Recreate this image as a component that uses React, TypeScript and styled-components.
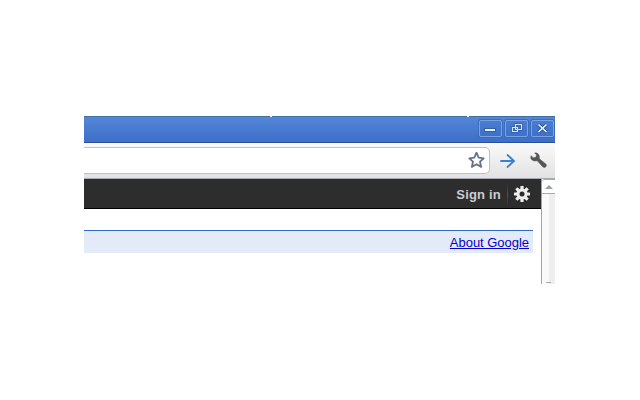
import React from 'react';
import styled, { createGlobalStyle } from 'styled-components';

const GlobalStyle = createGlobalStyle`
  * { box-sizing: border-box; }
  body { margin: 0; background: #fff; font-family: "Liberation Sans", Arial, sans-serif; }
  svg { display: block; }
`;
const Page = styled.main`
  width: 640px;
  height: 400px;
  padding: 116px 85px 116px 84px;
  overflow: hidden;
`;
const BrowserWindow = styled.div`
  width: 471px;
  height: 168px;
  overflow: hidden;
`;
const TitleBar = styled.header`
  position: relative;
  height: 27px;
  display: flex;
  justify-content: flex-end;
  gap: 3px;
  padding: 3px 1px 0 0;
  border-top: 1px solid #416f9f;
  border-bottom: 1px solid #294f9d;
  background: linear-gradient(#5386d8, #4274cc 75%, #3f6fc8);
`;
const TabGap = styled.span<{ $left: number }>`
  position: absolute;
  top: -1px;
  left: ${({ $left }) => $left}px;
  width: 2px;
  height: 1px;
  background: #f5f8f5;
`;
const WindowButton = styled.button`
  width: 23px;
  height: 17px;
  padding: 0;
  border: 1px solid #7ba2e0;
  border-radius: 2px;
  background: linear-gradient(#4a7cd0, #3e70c7);
  box-shadow: 0 0 0 1px #3b6cbc;
`;
const Toolbar = styled.div`
  height: 36px;
  display: flex;
  padding-top: 4px;
  border-bottom: 1px solid #a3acb5;
  background: linear-gradient(#fafafa, #e2e2e3);
`;
const AddressBar = styled.div`
  width: 406px;
  height: 27px;
  display: flex;
  justify-content: flex-end;
  padding: 3px 3px 0 0;
  border: solid #c0c0c2;
  border-width: 1px 1px 1px 0;
  border-radius: 0 5px 5px 0;
  background: #fff;
`;
const ToolIcon = styled.div<{ $gap: number }>`
  margin: 5px 0 0 ${({ $gap }) => $gap}px;
`;
const Viewport = styled.div`
  display: flex;
  height: 105px;
`;
const Content = styled.section`
  width: 457px;
`;
const AccountBar = styled.nav`
  height: 30px;
  display: flex;
  justify-content: flex-end;
  padding-right: 10px;
  border-bottom: 1px solid #000;
  background: #2d2d2d;
`;
const SignIn = styled.span`
  margin-right: 6px;
  color: #ccc;
  font-size: 13px;
  font-weight: bold;
  line-height: 31px;
  letter-spacing: 0.2px;
`;
const Divider = styled.span`
  width: 1px;
  height: 23px;
  margin: 4px 5px 0 0;
  background: linear-gradient(#303030, #505050, #303030);
`;
const Settings = styled.span`
  padding-top: 6px;
`;
const LinkStrip = styled.div`
  width: 449px;
  height: 23px;
  margin-top: 21px;
  padding-right: 4px;
  border-top: 1px solid #3369c8;
  background: #e3ebf8;
  font-size: 13px;
  line-height: 24px;
  letter-spacing: -0.03px;
  text-align: right;
`;
const AboutLink = styled.a`
  color: #0800cc;
`;
const Scrollbar = styled.aside`
  width: 14px;
  height: 105px;
  display: flex;
  flex-direction: column;
  border-left: 1px solid #a3a3a3;
  background: linear-gradient(90deg, #fafafa 0 7px, #eeeeee 7px);
`;
const ScrollUp = styled.div`
  height: 15px;
  padding: 5px 0 0 3px;
  border-top: 1px solid #aaa;
  border-bottom: 1px solid #aaa;
  border-radius: 3px 0 0 0;
  background: #fff;
`;
const ScrollEnd = styled.div`
  width: 5px;
  height: 1px;
  margin: auto 0 1px 4px;
  background: #a6a6a6;
`;
const starPath = 'M8.5 1.7 10.7 6.7l5 .6-3.7 3.4 1.2 5.2-4.7-2.7-4.7 2.7 1.2-5.2L1.3 7.3l5-.6Z';

export default function App() {
  return (
    <>
      <GlobalStyle />
      <Page>
        <BrowserWindow>
          <TitleBar>
            <TabGap $left={186} /><TabGap $left={383} />
            <WindowButton aria-label="Minimize">
              <svg width="21" height="15"><path d="M4 7h12v4H4z" fill="#315fae" /><path d="M5 8h10v2H5z" fill="#e9f1fb" /></svg>
            </WindowButton>
            <WindowButton aria-label="Restore">
              <svg width="21" height="15" fill="none">
                <path d="M9.5 3.5h6v5h-6zM6.5 6.5h5v4h-5z" stroke="#315ca9" strokeWidth="2.4" />
                <path d="M9.5 3.5h6v5h-6zM6.5 6.5h5v4h-5z" stroke="#dce8fa" strokeWidth="1.1" />
              </svg>
            </WindowButton>
            <WindowButton aria-label="Close">
              <svg width="21" height="15" fill="none"><path d="m6.5 3.5 8 7.5m0-7.5-8 7.5" stroke="#244f9d" strokeWidth="3.2" /><path d="m6.5 3.5 8 7.5m0-7.5-8 7.5" stroke="#f1f6fc" strokeWidth="1.7" /></svg>
            </WindowButton>
          </TitleBar>
          <Toolbar>
            <AddressBar>
              <svg width="18" height="18"><path d={starPath} fill="#fff" stroke="#667088" strokeWidth="1.8" strokeLinejoin="round" /></svg>
            </AddressBar>
            <ToolIcon $gap={9}>
              <svg width="17" height="17" fill="none" stroke="#3b7fd3" strokeWidth="1.8" strokeLinecap="round"><path d="M2 9h13M8.5 3 15 9l-6.5 6" /></svg>
            </ToolIcon>
            <ToolIcon $gap={14}>
              <svg width="18" height="18"><path d="M4.7.9 6.6 3.1 5.9 5.2 3.2 5.7 1 3.7C0 6.8 2.1 9 5.2 8.9l2-.2 5.4 6c2.1 2.2 5-.7 3.2-2.7L9.4 6.8 9.3 4.2C8.8 1.7 6.8.4 4.7.9Z" fill="#555" stroke="#555" strokeWidth=".5" /></svg>
            </ToolIcon>
          </Toolbar>
          <Viewport>
            <Content>
              <AccountBar>
                <SignIn>Sign in</SignIn>
                <Divider />
                <Settings>
                  <svg width="18" height="18" viewBox="-9 -9 18 18" fill="#eee">
                    {[0, 45, 90, 135].map((angle) => <rect key={angle} x="-1.6" y="-8" width="3.2" height="16" rx=".5" transform={`rotate(${angle})`} />)}
                    <circle r="5.6" /><circle r="2.5" fill="#2d2d2d" />
                  </svg>
                </Settings>
              </AccountBar>
              <LinkStrip><AboutLink href="#">About Google</AboutLink></LinkStrip>
            </Content>
            <Scrollbar>
              <ScrollUp><svg width="8" height="4"><path d="M4 0 8 4H0z" fill="#a0a0a0" /></svg></ScrollUp>
              <ScrollEnd />
            </Scrollbar>
          </Viewport>
        </BrowserWindow>
      </Page>
    </>
  );
}
